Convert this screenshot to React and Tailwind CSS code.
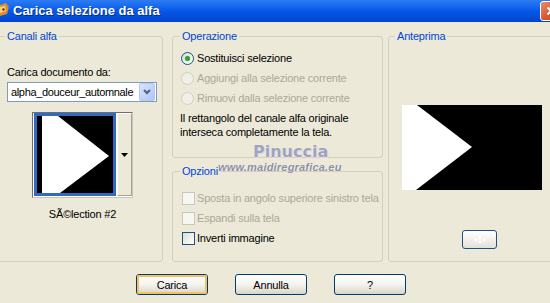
import React from "react";

function Radio({ checked, disabled, label }) {
  return (
    <div className="h-[20px] flex items-center">
      <div
        className={
          disabled
            ? "ml-[1px] mr-[3px] w-[13px] h-[13px] rounded-full border border-[#D2CFBF] bg-[#F1EFE6] shrink-0"
            : "ml-[1px] mr-[3px] w-[13px] h-[13px] rounded-full border border-[#1C5180] bg-gradient-to-br from-[#DCDCD5] to-[#FFFFFF] shrink-0 flex items-center justify-center"
        }
      >
        {checked && <div className="w-[5px] h-[5px] rounded-full bg-[#2EA52E] shadow-[0_0_1px_#7BD37B]" />}
      </div>
      <span className={disabled ? "text-[#ACA899] whitespace-nowrap" : "text-black whitespace-nowrap"}>{label}</span>
    </div>
  );
}

function Check({ disabled, label }) {
  return (
    <div className="h-[20px] flex items-center">
      <div
        className={
          disabled
            ? "ml-[2px] mr-[2px] w-[13px] h-[13px] border border-[#CAC8BB] bg-[#F7F6F1] shrink-0"
            : "ml-[2px] mr-[2px] w-[13px] h-[13px] border border-[#1C5180] bg-gradient-to-br from-[#DCDCD5] to-[#FFFFFF] shrink-0"
        }
      />
      <span className={disabled ? "text-[#ACA899] whitespace-nowrap" : "text-black whitespace-nowrap"}>{label}</span>
    </div>
  );
}

function XPButton({ children, def }) {
  return (
    <div className="w-[72px] h-[21px] rounded-[3px] border border-[#003C74] bg-gradient-to-b from-[#FFFFFF] via-[#F4F3EE] to-[#D9D5CA] flex items-center justify-center">
      {def ? (
        <div className="w-full h-full rounded-[2px] border-2 border-[#F5C15A] flex items-center justify-center">
          {children}
        </div>
      ) : (
        children
      )}
    </div>
  );
}

export default function App() {
  return (
    <div className="w-[550px] h-[303px] overflow-hidden bg-[#ECE9D8] font-['Liberation_Sans',Arial,sans-serif] text-[11px] leading-[14px] tracking-[-0.2px] text-black flex flex-col relative">
      {/* Title bar */}
      <div className="h-[22px] shrink-0 flex items-center bg-gradient-to-b from-[#2C7DF3] via-[#0558EA] to-[#0044CB] tracking-normal">
        <svg width="11" height="16" viewBox="0 0 11 16" className="shrink-0 self-start mt-[2px]">
          <path d="M0 3 L6 1 L9 5 L7 12 L0 14 Z" fill="#E58A2E" />
          <path d="M0 5 L5 4 L6 9 L0 11 Z" fill="#F6D37A" />
          <path d="M2 7 L4 6 L5 8 L3 9 Z" fill="#5A3418" />
          <path d="M7 2 L10 4 L9 8 Z" fill="#3A7FD0" />
        </svg>
        <span className="ml-[2px] text-white font-bold text-[13px] leading-[16px] [text-shadow:1px_1px_0_#0A2C8C]">
          Carica selezione da alfa
        </span>
        <div className="ml-auto mr-[-12px] self-start mt-[1px] w-[22px] h-[20px] rounded-[3px] border border-white bg-gradient-to-br from-[#EA8B6C] via-[#D95A33] to-[#C33E1B] flex items-center justify-center shrink-0">
          <svg width="10" height="10" viewBox="0 0 10 10">
            <path d="M1.5 1.5 L8.5 8.5 M8.5 1.5 L1.5 8.5" stroke="white" strokeWidth="2" />
          </svg>
        </div>
      </div>

      {/* Groups */}
      <div className="flex items-start mt-[7px] ml-[-3px]">
        {/* Canali alfa */}
        <fieldset className="w-[166px] h-[233px] shrink-0 border border-[#D0D0BF] rounded-[3px] pl-[7px]">
          <legend className="px-[2px] text-[#0046D5] leading-[14px]">Canali alfa</legend>
          <div className="flex flex-col">
            <div className="mt-[22px] ml-[2px]">Carica documento da:</div>
            <div className="mt-[3px] ml-[2px] w-[150px] h-[20px] border border-[#7F9DB9] bg-white flex items-center">
              <span className="ml-[3px] flex-1 whitespace-nowrap overflow-hidden tracking-[-0.35px]">alpha_douceur_automnale</span>
              <div className="mr-[1px] w-[16px] h-[18px] rounded-[2px] border border-[#B4C7F3] bg-gradient-to-br from-[#D8E3FD] to-[#B0C5F6] flex items-center justify-center shrink-0">
                <svg width="8" height="6" viewBox="0 0 8 6">
                  <path d="M1 1 L4 4 L7 1" stroke="#4D6185" strokeWidth="2" fill="none" />
                </svg>
              </div>
            </div>
            <div className="mt-[10px] ml-[27px] w-[101px] h-[86px] border border-t-[#6E6E6E] border-l-[#6E6E6E] border-r-[#C8C5B8] border-b-[#C8C5B8] bg-white flex">
              <div className="ml-[1px] w-[82px] h-[83px] border-[3px] border-[#316AC5] bg-black shrink-0">
                <svg width="76" height="77" viewBox="0 0 76 77" className="block">
                  <polygon points="5,0 21,0 72,40 23,77 5,77" fill="white" />
                </svg>
              </div>
              <div className="flex-1 ml-[1px] mb-[1px] border border-l-white border-t-white border-r-[#A5A294] border-b-[#A5A294] bg-[#ECE9D8] flex items-center justify-center">
                <svg width="7" height="4" viewBox="0 0 7 4">
                  <polygon points="0,0 7,0 3.5,4" fill="black" />
                </svg>
              </div>
            </div>
            <div className="mt-[9px] w-[155px] text-center">SÃ©lection #2</div>
          </div>
        </fieldset>

        {/* Middle column */}
        <div className="ml-[9px] w-[211px] shrink-0 flex flex-col">
          <fieldset className="h-[129px] border border-[#D0D0BF] rounded-[3px] pl-[7px]">
            <legend className="px-[2px] text-[#0046D5] leading-[14px]">Operazione</legend>
            <div className="mt-[5px] flex flex-col">
              <Radio checked label="Sostituisci selezione" />
              <Radio disabled label="Aggiungi alla selezione corrente" />
              <Radio disabled label="Rimuovi dalla selezione corrente" />
              <div className="mt-[3px]">
                Il rettangolo del canale alfa originale
                <br />
                interseca completamente la tela.
              </div>
            </div>
          </fieldset>
          <fieldset className="mt-[6px] h-[98px] border border-[#D0D0BF] rounded-[3px] pl-[7px]">
            <legend className="px-[2px] text-[#0046D5] leading-[14px]">Opzioni</legend>
            <div className="mt-[10px] flex flex-col">
              <Check disabled label="Sposta in angolo superiore sinistro tela" />
              <Check disabled label="Espandi sulla tela" />
              <Check label="Inverti immagine" />
            </div>
          </fieldset>
        </div>

        {/* Anteprima */}
        <fieldset className="ml-[5px] w-[168px] h-[233px] shrink-0 border border-[#D0D0BF] rounded-[3px] pl-[6px]">
          <legend className="px-[2px] text-[#0046D5] leading-[14px]">Anteprima</legend>
          <div className="flex flex-col">
            <div className="mt-[62px] ml-[7px] w-[140px] h-[85px] bg-black">
              <svg width="140" height="85" viewBox="0 0 140 85" className="block">
                <polygon points="0,0 15,0 70,42 14,85 0,85" fill="white" />
              </svg>
            </div>
            <div className="mt-[40px] ml-[67px] w-[35px] h-[19px] rounded-[3px] border border-[#1E4F87] bg-gradient-to-b from-[#FFFFFF] to-[#E3E1D8] flex items-center justify-center">
              <svg width="14" height="8" viewBox="0 0 14 8">
                <circle cx="3" cy="4" r="1.6" fill="#FFFFFF" />
                <circle cx="7" cy="2" r="1.6" fill="#FFFFFF" />
                <circle cx="7" cy="6" r="1.6" fill="#FFFFFF" />
                <circle cx="11" cy="4" r="1.6" fill="#FFFFFF" />
              </svg>
            </div>
          </div>
        </fieldset>
      </div>

      {/* Buttons */}
      <div className="flex mt-[12px] ml-[136px] gap-[27px]">
        <XPButton def>Carica</XPButton>
        <XPButton>Annulla</XPButton>
        <XPButton>?</XPButton>
      </div>

      {/* Watermark overlay */}
      <div className="absolute left-[253px] top-[142px] text-[16px] leading-[20px] font-bold tracking-normal text-[#A2A2BC] [text-shadow:0_0_1px_#FFFFFF,1px_1px_0_#D8D8E4] font-['DejaVu_Sans',sans-serif]">
        Pinuccia
      </div>
      <div className="absolute left-[218px] top-[161px] text-[11px] leading-[13px] font-bold italic tracking-[0.2px] text-[#8E8EA6] [text-shadow:0_0_1px_#FFFFFF]">
        www.maidiregrafica.eu
      </div>
    </div>
  );
}
